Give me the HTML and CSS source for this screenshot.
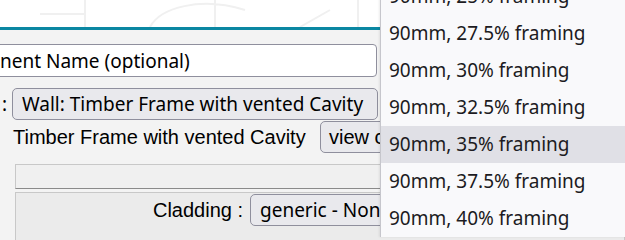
FILE: index.html
```html
<!DOCTYPE html>
<html lang="en">
<head>
    <meta charset="UTF-8">
    <title>Element Editor</title>
    <link rel="stylesheet" href="styles.css">
</head>
<body>
    <div class="banner">
        <svg class="sketch" width="625" height="27" viewBox="0 0 625 27">
            <path d="M85 0 V27 M85 14 H40 M150 27 C160 8 200 -4 245 10 M215 0 V27 M358 0 V27 M300 27 L330 10" fill="none" stroke="#f0f0f0" stroke-width="2"/>
        </svg>
    </div>

    <div class="form">
        <div class="row name-row">
            <input class="name-input" type="text" placeholder="nent Name (optional)">
        </div>

        <div class="row type-row">
            <span class="colon">:</span>
            <div class="select wide">Wall: Timber Frame with vented Cavity</div>
        </div>

        <div class="row desc-row">
            <span class="desc">Timber Frame with vented Cavity</span>
            <div class="button">view construction</div>
        </div>

        <div class="panel-head"></div>

        <div class="panel">
            <span class="field-label">Cladding :</span>
            <div class="select">generic - None</div>
        </div>
    </div>

    <ul class="dropdown">
        <li>90mm, 25% framing</li>
        <li>90mm, 27.5% framing</li>
        <li>90mm, 30% framing</li>
        <li>90mm, 32.5% framing</li>
        <li class="hover">90mm, 35% framing</li>
        <li>90mm, 37.5% framing</li>
        <li>90mm, 40% framing</li>
    </ul>
</body>
</html>
```

FILE: styles.css
```css
:root {
    --teal: #0a87a2;
    --page: #f3f3f3;
    --ui-font: "Noto Sans", "Open Sans", sans-serif;
    --text-font: "Liberation Sans", Arial, sans-serif;
}
body {
    margin: 0;
    width: 625px;
    height: 240px;
    overflow: hidden;
    position: relative;
    background-color: var(--page);
    color: #000;
}
.banner {
    height: 27px;
    background-color: #fff;
    border-bottom: 3px solid var(--teal);
}
.sketch {
    display: block;
}
.row {
    display: flex;
    align-items: center;
}
.name-row {
    margin-top: 14px;
}
.name-input {
    width: 388px;
    height: 33px;
    margin-left: -11px;
    padding: 0 0 0 10px;
    box-sizing: border-box;
    border: 1px solid #8f8f9d;
    border-radius: 4px;
    background: #fff;
    font-family: var(--ui-font);
    font-size: 19px;
}
.name-input::placeholder {
    color: #000;
    opacity: 1;
}
.type-row {
    margin-top: 11px;
}
.colon {
    flex: none;
    width: 12px;
    padding-left: 2px;
    box-sizing: border-box;
    font-family: var(--ui-font);
    font-size: 19px;
}
.select {
    flex: none;
    height: 32px;
    padding: 0 9px;
    box-sizing: border-box;
    display: flex;
    align-items: center;
    white-space: nowrap;
    overflow: hidden;
    background-color: #e9e9ed;
    border: 1px solid #8f8f9d;
    border-radius: 5px;
    font-family: var(--ui-font);
    font-size: 19px;
}
.select.wide {
    width: 366px;
}
.desc-row {
    width: 380px;
    box-sizing: border-box;
    overflow: hidden;
    margin-top: 1px;
    padding-left: 13px;
}
.desc {
    flex: none;
    width: 307px;
    font-family: var(--text-font);
    font-size: 20px;
}
.button {
    flex: none;
    height: 32px;
    padding: 0 8px;
    box-sizing: border-box;
    display: flex;
    align-items: center;
    white-space: nowrap;
    background-color: #e9e9ed;
    border: 1px solid #8f8f9d;
    border-radius: 5px;
    font-family: var(--text-font);
    font-size: 20px;
}
.panel-head {
    margin: 11px 0 0 15px;
    height: 23px;
    background-color: #f0f0f0;
    border: 1px solid #c8c8c8;
    border-bottom-color: #8a8a8a;
}
.panel {
    margin: 3px 0 0 15px;
    height: 60px;
    padding-top: 1px;
    display: flex;
    align-items: flex-start;
    gap: 7px;
    background-color: #ebebeb;
    border: 1px solid #c8c8c8;
}
.field-label {
    flex: none;
    width: 227px;
    text-align: right;
    line-height: 32px;
    font-family: var(--text-font);
    font-size: 20px;
}
.dropdown {
    position: absolute;
    left: 380px;
    top: -22px;
    width: 245px;
    margin: 0;
    padding: 0;
    list-style: none;
    background-color: #f9f9fb;
    border-left: 1px solid #c6c6cc;
    box-shadow: -1px 0 2px rgba(0, 0, 0, 0.08);
}
.dropdown li {
    height: 37px;
    line-height: 37px;
    padding-left: 8px;
    color: #1c1b22;
    font-family: var(--ui-font);
    font-size: 19px;
    white-space: nowrap;
}
.dropdown li.hover {
    background-color: #e0e0e6;
}
```
